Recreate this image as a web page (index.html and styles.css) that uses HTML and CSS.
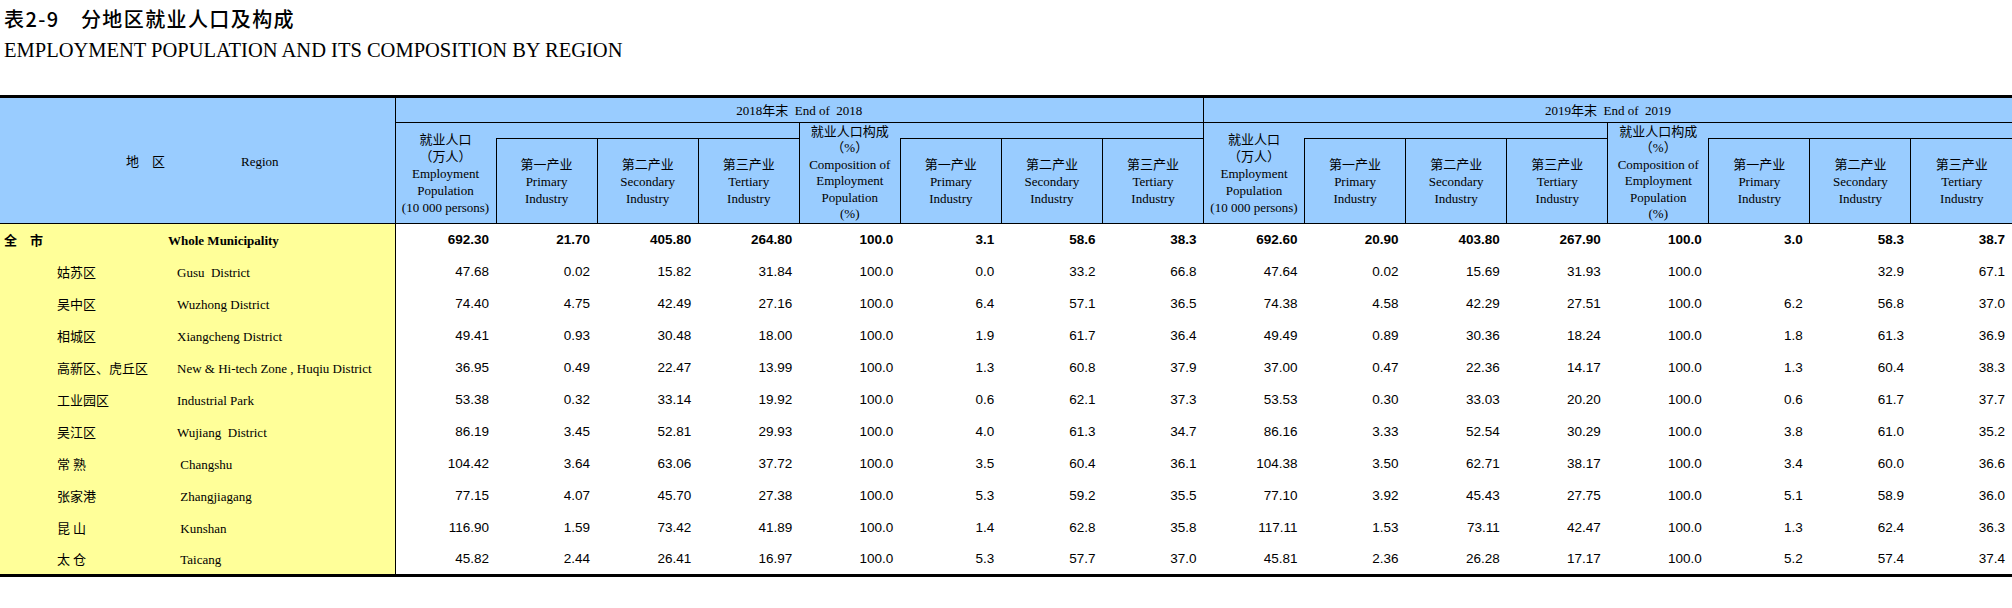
FILE: index.html
```html
<!DOCTYPE html>
<html lang="zh-CN">
<head>
<meta charset="utf-8">
<title>表2-9 分地区就业人口及构成</title>
<link rel="stylesheet" href="styles.css">
</head>
<body>
<h1 class="title">表2-9　分地区就业人口及构成</h1>
<h2 class="subtitle">EMPLOYMENT POPULATION AND ITS COMPOSITION BY REGION</h2>
<table class="stats">
  <colgroup>
    <col class="col-region">
    <col><col><col><col><col><col><col><col>
    <col><col><col><col><col><col><col><col>
  </colgroup>
  <thead>
    <tr class="r1">
      <th class="th-region" rowspan="3"><span class="rh-cn">地　区</span><span class="rh-en">Region</span></th>
      <th class="th-year" colspan="8">2018年末&nbsp; End of&nbsp; 2018</th>
      <th class="th-year grp" colspan="8">2019年末&nbsp; End of&nbsp; 2019</th>
    </tr>
    <tr class="r2">
      <th class="th-emp" rowspan="2">就业人口<br>（万人）<br>Employment<br>Population<br>(10 000 persons)</th>
      <th class="th-blank" colspan="3"></th>
      <th class="th-comp" rowspan="2">就业人口构成<br>（%）<br>Composition of<br>Employment<br>Population<br>(%)</th>
      <th class="th-blank" colspan="3"></th>
      <th class="th-emp grp" rowspan="2">就业人口<br>（万人）<br>Employment<br>Population<br>(10 000 persons)</th>
      <th class="th-blank" colspan="3"></th>
      <th class="th-comp" rowspan="2">就业人口构成<br>（%）<br>Composition of<br>Employment<br>Population<br>(%)</th>
      <th class="th-blank" colspan="3"></th>
    </tr>
    <tr class="r3">
      <th class="th-ind">第一产业<br>Primary<br>Industry</th>
      <th class="th-ind">第二产业<br>Secondary<br>Industry</th>
      <th class="th-ind">第三产业<br>Tertiary<br>Industry</th>
      <th class="th-ind">第一产业<br>Primary<br>Industry</th>
      <th class="th-ind">第二产业<br>Secondary<br>Industry</th>
      <th class="th-ind">第三产业<br>Tertiary<br>Industry</th>
      <th class="th-ind">第一产业<br>Primary<br>Industry</th>
      <th class="th-ind">第二产业<br>Secondary<br>Industry</th>
      <th class="th-ind">第三产业<br>Tertiary<br>Industry</th>
      <th class="th-ind">第一产业<br>Primary<br>Industry</th>
      <th class="th-ind">第二产业<br>Secondary<br>Industry</th>
      <th class="th-ind">第三产业<br>Tertiary<br>Industry</th>
    </tr>
  </thead>
  <tbody>
    <tr class="total">
      <td class="region"><span class="cn">全　市</span><span class="en">Whole Municipality</span></td>
      <td>692.30</td><td>21.70</td><td>405.80</td><td>264.80</td><td>100.0</td><td>3.1</td><td>58.6</td><td>38.3</td>
      <td>692.60</td><td>20.90</td><td>403.80</td><td>267.90</td><td>100.0</td><td>3.0</td><td>58.3</td><td>38.7</td>
    </tr>
    <tr>
      <td class="region"><span class="cn">姑苏区</span><span class="en">Gusu&nbsp; District</span></td>
      <td>47.68</td><td>0.02</td><td>15.82</td><td>31.84</td><td>100.0</td><td>0.0</td><td>33.2</td><td>66.8</td>
      <td>47.64</td><td>0.02</td><td>15.69</td><td>31.93</td><td>100.0</td><td></td><td>32.9</td><td>67.1</td>
    </tr>
    <tr>
      <td class="region"><span class="cn">吴中区</span><span class="en">Wuzhong District</span></td>
      <td>74.40</td><td>4.75</td><td>42.49</td><td>27.16</td><td>100.0</td><td>6.4</td><td>57.1</td><td>36.5</td>
      <td>74.38</td><td>4.58</td><td>42.29</td><td>27.51</td><td>100.0</td><td>6.2</td><td>56.8</td><td>37.0</td>
    </tr>
    <tr>
      <td class="region"><span class="cn">相城区</span><span class="en">Xiangcheng District</span></td>
      <td>49.41</td><td>0.93</td><td>30.48</td><td>18.00</td><td>100.0</td><td>1.9</td><td>61.7</td><td>36.4</td>
      <td>49.49</td><td>0.89</td><td>30.36</td><td>18.24</td><td>100.0</td><td>1.8</td><td>61.3</td><td>36.9</td>
    </tr>
    <tr>
      <td class="region"><span class="cn">高新区、虎丘区</span><span class="en">New &amp; Hi-tech Zone , Huqiu District</span></td>
      <td>36.95</td><td>0.49</td><td>22.47</td><td>13.99</td><td>100.0</td><td>1.3</td><td>60.8</td><td>37.9</td>
      <td>37.00</td><td>0.47</td><td>22.36</td><td>14.17</td><td>100.0</td><td>1.3</td><td>60.4</td><td>38.3</td>
    </tr>
    <tr>
      <td class="region"><span class="cn">工业园区</span><span class="en">Industrial Park</span></td>
      <td>53.38</td><td>0.32</td><td>33.14</td><td>19.92</td><td>100.0</td><td>0.6</td><td>62.1</td><td>37.3</td>
      <td>53.53</td><td>0.30</td><td>33.03</td><td>20.20</td><td>100.0</td><td>0.6</td><td>61.7</td><td>37.7</td>
    </tr>
    <tr>
      <td class="region"><span class="cn">吴江区</span><span class="en">Wujiang&nbsp; District</span></td>
      <td>86.19</td><td>3.45</td><td>52.81</td><td>29.93</td><td>100.0</td><td>4.0</td><td>61.3</td><td>34.7</td>
      <td>86.16</td><td>3.33</td><td>52.54</td><td>30.29</td><td>100.0</td><td>3.8</td><td>61.0</td><td>35.2</td>
    </tr>
    <tr>
      <td class="region"><span class="cn">常 熟</span><span class="en">&nbsp;Changshu</span></td>
      <td>104.42</td><td>3.64</td><td>63.06</td><td>37.72</td><td>100.0</td><td>3.5</td><td>60.4</td><td>36.1</td>
      <td>104.38</td><td>3.50</td><td>62.71</td><td>38.17</td><td>100.0</td><td>3.4</td><td>60.0</td><td>36.6</td>
    </tr>
    <tr>
      <td class="region"><span class="cn">张家港</span><span class="en">&nbsp;Zhangjiagang</span></td>
      <td>77.15</td><td>4.07</td><td>45.70</td><td>27.38</td><td>100.0</td><td>5.3</td><td>59.2</td><td>35.5</td>
      <td>77.10</td><td>3.92</td><td>45.43</td><td>27.75</td><td>100.0</td><td>5.1</td><td>58.9</td><td>36.0</td>
    </tr>
    <tr>
      <td class="region"><span class="cn">昆 山</span><span class="en">&nbsp;Kunshan</span></td>
      <td>116.90</td><td>1.59</td><td>73.42</td><td>41.89</td><td>100.0</td><td>1.4</td><td>62.8</td><td>35.8</td>
      <td>117.11</td><td>1.53</td><td>73.11</td><td>42.47</td><td>100.0</td><td>1.3</td><td>62.4</td><td>36.3</td>
    </tr>
    <tr>
      <td class="region"><span class="cn">太 仓</span><span class="en">&nbsp;Taicang</span></td>
      <td>45.82</td><td>2.44</td><td>26.41</td><td>16.97</td><td>100.0</td><td>5.3</td><td>57.7</td><td>37.0</td>
      <td>45.81</td><td>2.36</td><td>26.28</td><td>17.17</td><td>100.0</td><td>5.2</td><td>57.4</td><td>37.4</td>
    </tr>
  </tbody>
</table>
</body>
</html>
```

FILE: styles.css
```css
html, body {
  margin: 0;
  padding: 0;
  background: #ffffff;
}

body {
  width: 2012px;
  color: #000000;
}

.title {
  margin: 0;
  padding: 5px 0 0 4px;
  font-family: "Noto Sans CJK SC", sans-serif;
  font-size: 20px;
  font-weight: 500;
  letter-spacing: 1.4px;
  line-height: 28px;
}

.subtitle {
  margin: 5px 0 0 4px;
  font-family: "Liberation Serif", serif;
  font-size: 20.5px;
  font-weight: normal;
  line-height: 24px;
}

.stats {
  margin-top: 33px;
  width: 2012px;
  table-layout: fixed;
  border-collapse: collapse;
  border-top: 3px solid #000;
  border-bottom: 3px solid #000;
}

.col-region {
  width: 395px;
}

.r1 { height: 26px; }
.r2 { height: 16px; }
.r3 { height: 85px; }

.stats th {
  padding: 0;
  background: #99ccff;
  font-family: "Liberation Serif", "Noto Sans CJK SC", serif;
  font-size: 13px;
  font-weight: normal;
  line-height: 17px;
  text-align: center;
  vertical-align: middle;
  white-space: nowrap;
}

.th-region {
  text-align: left !important;
  border-right: 1px solid #000;
  border-bottom: 1px solid #000;
}

.rh-cn {
  display: inline-block;
  width: 115px;
  padding-left: 126px;
  font-family: "Noto Sans CJK SC", sans-serif;
}

.th-year {
  border-bottom: 1px solid #000;
}

.th-emp,
.th-ind {
  border-bottom: 1px solid #000;
}

.th-blank {
  border-bottom: 1px solid #000;
}

.th-comp {
  line-height: 16.5px !important;
  border-left: 1px solid #000;
  border-bottom: 1px solid #000;
}

.th-ind {
  border-left: 1px solid #000;
}

.grp {
  border-left: 1px solid #000;
}

.stats tbody tr {
  height: 32px;
}

.stats td {
  padding: 0 7px 0 0;
  font-family: "Liberation Sans", Arial, sans-serif;
  font-size: 13.5px;
  text-align: right;
  vertical-align: middle;
  white-space: nowrap;
}

.stats td.region {
  padding: 0;
  background: #ffff99;
  border-right: 1px solid #000;
  text-align: left;
  font-family: "Liberation Serif", "Noto Sans CJK SC", serif;
  font-size: 13px;
}

.cn {
  display: inline-block;
  width: 120px;
  padding-left: 57px;
  font-family: "Noto Sans CJK SC", sans-serif;
}

.total td {
  font-weight: bold;
}

.total .cn {
  width: 164px;
  padding-left: 4px;
}
```
